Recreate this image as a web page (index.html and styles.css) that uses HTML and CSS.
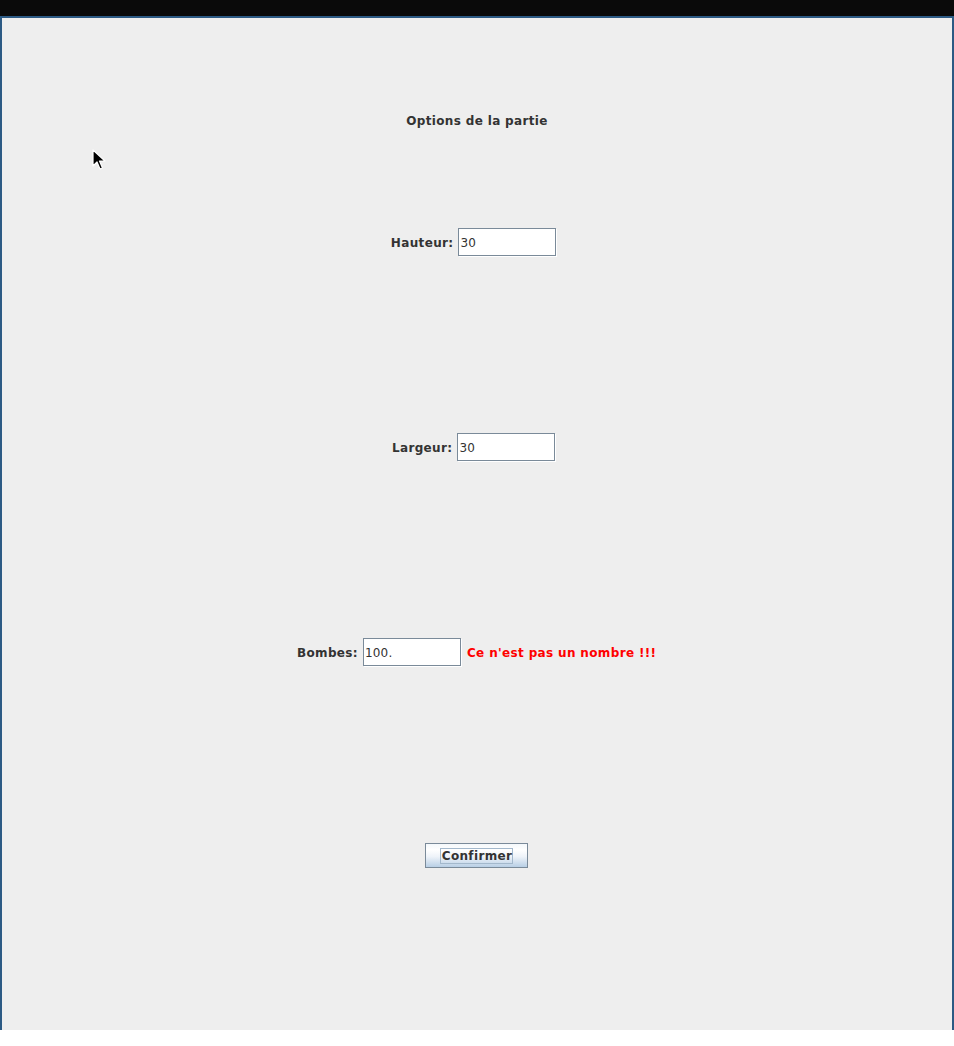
FILE: index.html
```html
<!DOCTYPE html>
<html lang="fr">
<head>
<meta charset="utf-8">
<title>Options de la partie</title>
<link rel="stylesheet" href="styles.css">
</head>
<body>
<div class="topbar"></div>
<div class="window">
  <div class="content">
    <div class="title">Options de la partie</div>
    <div class="row">
      <span class="label">Hauteur:</span>
      <span class="field">30</span>
      <span class="error"></span>
    </div>
    <div class="row">
      <span class="label">Largeur:</span>
      <span class="field">30</span>
      <span class="error"></span>
    </div>
    <div class="row">
      <span class="label">Bombes:</span>
      <span class="field">100.</span>
      <span class="error">Ce n'est pas un nombre !!!</span>
    </div>
    <div class="row">
      <button class="button"><span class="focus">Confirmer</span></button>
    </div>
  </div>
  <svg class="cursor" width="14" height="22" viewBox="0 0 14 22">
    <path d="M1 1 L1 17 L5 13 L8 20 L10.5 19 L7.5 12 L13 12 Z" fill="#000" stroke="#fff" stroke-width="1.2" stroke-linejoin="round"/>
  </svg>
</div>
</body>
</html>
```

FILE: styles.css
```css
html, body {
  margin: 0;
  padding: 0;
  background: #ffffff;
}

body {
  width: 954px;
  height: 1046px;
  overflow: hidden;
  font-family: "DejaVu Sans", sans-serif;
  font-size: 12px;
  letter-spacing: 0.35px;
}

.topbar {
  height: 16px;
  background: #0a0a0a;
}

.window {
  position: relative;
  height: 1012px;
  border: 2px solid #2c5a84;
  border-bottom: none;
  background: #eeeeee;
}

.content {
  display: flex;
  flex-direction: column;
  align-items: stretch;
  padding-top: 96px;
  gap: 177px;
}

.title {
  font-weight: bold;
  color: #333333;
  line-height: 15px;
  text-align: center;
  margin-bottom: -78px;
}

.row {
  display: flex;
  justify-content: center;
  align-items: center;
  gap: 5px;
  height: 28px;
  padding-right: 1px;
}

.label {
  font-weight: bold;
  color: #333333;
  line-height: 15px;
  padding-top: 2px;
}

.field {
  box-sizing: border-box;
  width: 98px;
  height: 28px;
  margin-right: 1px;
  border: 1px solid #7a8a99;
  box-shadow: 1px 1px 0 #ffffff;
  background: #ffffff;
  color: #333333;
  padding-left: 1px;
  line-height: 28px;
  overflow: hidden;
  letter-spacing: 0.2px;
}

.error {
  font-weight: bold;
  color: #ff0000;
  line-height: 15px;
  padding-top: 2px;
  margin-right: -0.35px;
}

.button {
  box-sizing: border-box;
  width: 103px;
  height: 25px;
  margin-top: -3px;
  border: 1px solid #7a8a99;
  background: linear-gradient(to bottom, #f4f8fb 0%, #ffffff 25%, #eef3f9 55%, #b8cfe5 100%);
  font-family: "DejaVu Sans", sans-serif;
  font-size: 12px;
  font-weight: bold;
  letter-spacing: 0.35px;
  color: #333333;
  padding: 0;
  display: flex;
  justify-content: center;
  align-items: center;
}

.focus {
  border: 1px solid #a3b8cc;
  padding: 0 0 0 1px;
  line-height: 14px;
}

.cursor {
  position: absolute;
  left: 90px;
  top: 131px;
}
```
